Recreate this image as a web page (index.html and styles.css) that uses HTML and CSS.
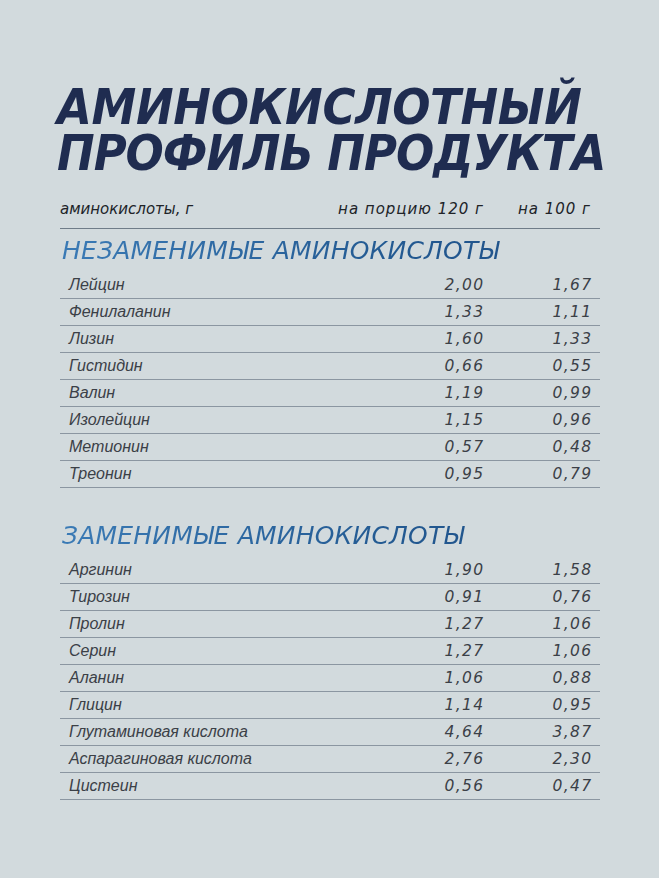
FILE: index.html
```html
<!DOCTYPE html>
<html lang="ru">
<head>
<meta charset="utf-8">
<link rel="stylesheet" href="styles.css">
</head>
<body>
<main class="page">
  <h1 class="title"><span class="line">АМИНОКИСЛОТНЫЙ</span><span class="line line2">ПРОФИЛЬ ПРОДУКТА</span></h1>
  <div class="table">
    <div class="head">
      <span>аминокислоты, г</span><span class="num">на порцию 120 г</span><span class="num">на 100 г</span>
    </div>
    <h2 class="section">НЕЗАМЕНИМЫЕ АМИНОКИСЛОТЫ</h2>
    <div class="rows">
      <div class="row"><span>Лейцин</span><span class="num">2,00</span><span class="num">1,67</span></div>
      <div class="row"><span>Фенилаланин</span><span class="num">1,33</span><span class="num">1,11</span></div>
      <div class="row"><span>Лизин</span><span class="num">1,60</span><span class="num">1,33</span></div>
      <div class="row"><span>Гистидин</span><span class="num">0,66</span><span class="num">0,55</span></div>
      <div class="row"><span>Валин</span><span class="num">1,19</span><span class="num">0,99</span></div>
      <div class="row"><span>Изолейцин</span><span class="num">1,15</span><span class="num">0,96</span></div>
      <div class="row"><span>Метионин</span><span class="num">0,57</span><span class="num">0,48</span></div>
      <div class="row"><span>Треонин</span><span class="num">0,95</span><span class="num">0,79</span></div>
    </div>
    <h2 class="section section2">ЗАМЕНИМЫЕ АМИНОКИСЛОТЫ</h2>
    <div class="rows">
      <div class="row"><span>Аргинин</span><span class="num">1,90</span><span class="num">1,58</span></div>
      <div class="row"><span>Тирозин</span><span class="num">0,91</span><span class="num">0,76</span></div>
      <div class="row"><span>Пролин</span><span class="num">1,27</span><span class="num">1,06</span></div>
      <div class="row"><span>Серин</span><span class="num">1,27</span><span class="num">1,06</span></div>
      <div class="row"><span>Аланин</span><span class="num">1,06</span><span class="num">0,88</span></div>
      <div class="row"><span>Глицин</span><span class="num">1,14</span><span class="num">0,95</span></div>
      <div class="row"><span>Глутаминовая кислота</span><span class="num">4,64</span><span class="num">3,87</span></div>
      <div class="row"><span>Аспарагиновая кислота</span><span class="num">2,76</span><span class="num">2,30</span></div>
      <div class="row"><span>Цистеин</span><span class="num">0,56</span><span class="num">0,47</span></div>
    </div>
  </div>
</main>
</body>
</html>
```
FILE: styles.css
```css
html, body {
  margin: 0;
  padding: 0;
}
body {
  background: #d2dadd;
  width: 659px;
  height: 878px;
  overflow: hidden;
}
.page {
  padding: 84px 0 0 57px;
}
.title {
  margin: 0;
  font-family: "DejaVu Sans Condensed", "DejaVu Sans", sans-serif;
  font-weight: 700;
  font-style: oblique;
  font-size: 50px;
  line-height: 46px;
  letter-spacing: -0.3px;
  color: #1f2c50;
  white-space: nowrap;
}
.line {
  display: block;
}
.line2 {
  letter-spacing: -1px;
}
.table {
  width: 540px;
  margin: 23px 0 0 3px;
}
.head {
  display: grid;
  grid-template-columns: 1fr 170px 107px;
  padding: 0 10px 9px 0;
  border-bottom: 1px solid #6f7c88;
  font-family: "DejaVu Sans", sans-serif;
  font-style: oblique;
  font-size: 15px;
  line-height: 20px;
  color: #202328;
}
.num {
  text-align: right;
}
.head .num {
  letter-spacing: 1px;
  margin-right: -1px;
}
.section {
  margin: 7px 0 0 2px;
  font-family: "DejaVu Sans", sans-serif;
  font-style: oblique;
  font-weight: normal;
  font-size: 25px;
  line-height: 30px;
  letter-spacing: 0.2px;
  background: linear-gradient(90deg, #3a7ab5 0%, #235a92 60%, #1f4f86 100%);
  -webkit-background-clip: text;
  background-clip: text;
  color: transparent;
}
.section2 {
  margin-top: 33px;
}
.rows {
  margin-top: 6px;
}
.row {
  display: grid;
  grid-template-columns: 1fr 100px 108px;
  padding: 0 9px;
  height: 26px;
  line-height: 26px;
  border-bottom: 1px solid #8b96a1;
  font-family: "Liberation Sans", sans-serif;
  font-style: italic;
  font-size: 16px;
  color: #3b4047;
}
.row .num {
  font-family: "DejaVu Sans", sans-serif;
  font-style: oblique;
  font-size: 15.5px;
  letter-spacing: 1.3px;
  margin-right: -1.3px;
}
```
